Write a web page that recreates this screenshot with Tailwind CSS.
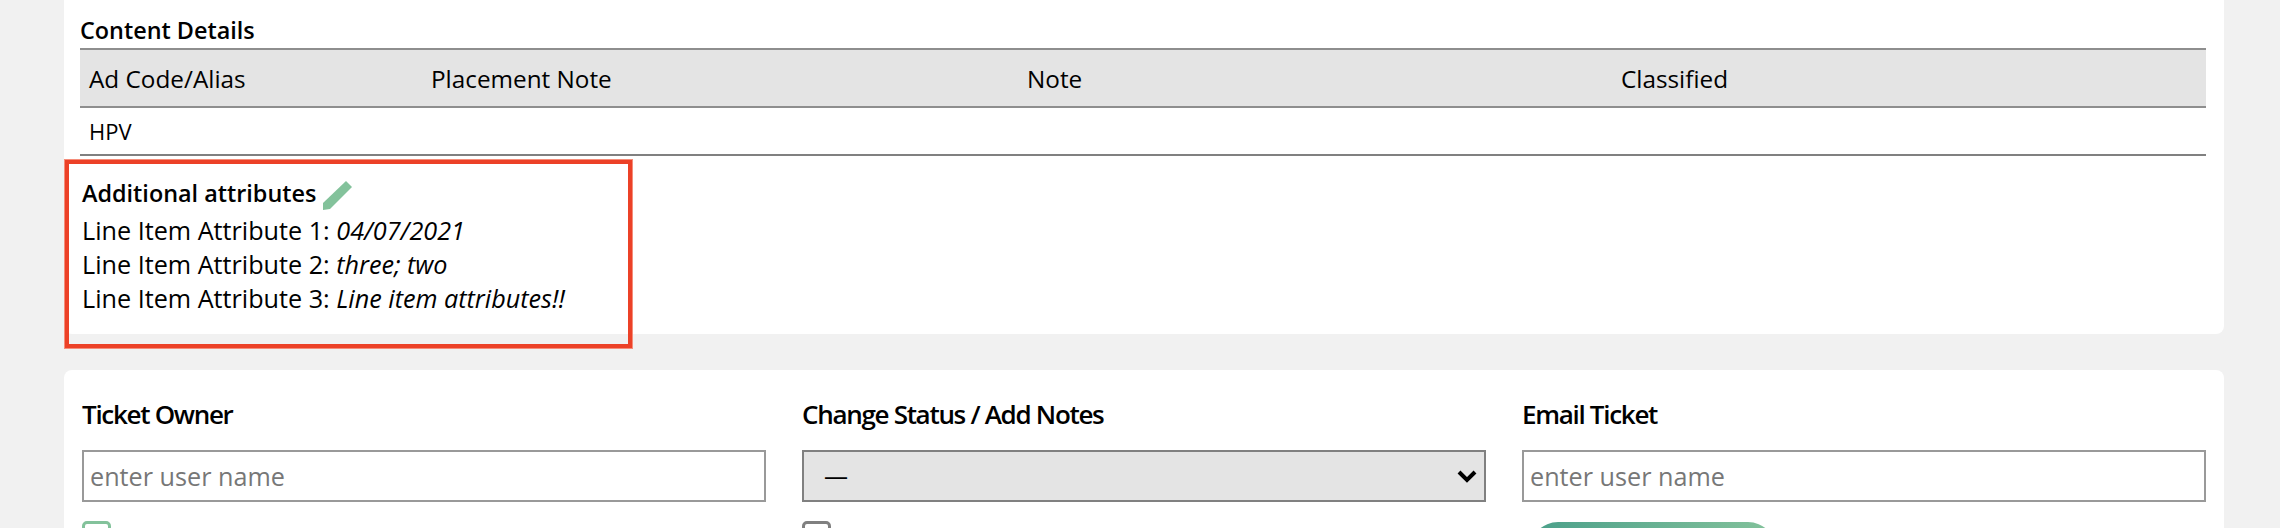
<!DOCTYPE html>
<html lang="en">
<head>
    <meta charset="UTF-8">
    <meta name="viewport" content="width=device-width, initial-scale=1.0">
    <title>Ticket</title>
    <script src="https://cdn.jsdelivr.net/npm/@tailwindcss/browser@4"></script>
</head>
<body class="bg-[#f1f1f1] font-['Open_Sans',sans-serif] text-black">
    <div class="relative ml-16 w-[2160px] h-[528px] overflow-hidden">
        <div class="bg-white rounded-b-lg h-[334px] pl-4 pr-[18px] pt-[12px]">
            <h2 class="text-[23.4px] leading-[36px] font-semibold">Content Details</h2>
            <table class="w-full table-fixed text-left">
                <thead>
                    <tr class="h-[58px] bg-[#e4e4e4] border-y-2 border-[#8e8e8e] text-[24.3px]">
                        <th class="w-[342px] pl-[9px] pt-0.5 font-normal">Ad Code/Alias</th>
                        <th class="w-[596px] pl-[9px] pt-0.5 font-normal">Placement Note</th>
                        <th class="w-[594px] pl-[9px] pt-0.5 font-normal">Note</th>
                        <th class="pl-[9px] pt-0.5 font-normal">Classified</th>
                    </tr>
                </thead>
                <tbody>
                    <tr class="h-12 border-b-2 border-[#808080] text-[22px]">
                        <td class="pl-[9px]" colspan="4">HPV</td>
                    </tr>
                </tbody>
            </table>
            <div class="pt-[17px] pl-[2px] text-[25.2px] leading-[34px]">
                <h2 class="flex items-center h-[40px] text-[23.4px] font-semibold">Additional attributes
                    <svg class="ml-[7px] mt-1" width="29" height="29" viewBox="0 0 29 29" fill="#83c29b"><path d="M23 0l6 6L7 28 0 29V22z"/></svg>
                </h2>
                <p>Line Item Attribute 1: <em>04/07/2021</em></p>
                <p>Line Item Attribute 2: <em>three; two</em></p>
                <p>Line Item Attribute 3: <em>Line item attributes!!</em></p>
            </div>
        </div>

        <!-- highlight over the attributes -->
        <div class="absolute left-0 top-[159px] w-[569px] h-[190px] border border-[#f58d7a]">
            <div class="w-full h-full border-4 border-[#ec4127]"></div>
        </div>

        <div class="mt-9 bg-white rounded-t-lg h-[158px] overflow-hidden pl-[18px] pr-[18px] pt-[24px] grid grid-cols-3 gap-9">
            <div>
                <h3 class="text-[26px] leading-[40px] font-semibold tracking-[-1.3px]">Ticket Owner</h3>
                <input type="text" placeholder="enter user name" class="mt-4 block w-full h-[52px] border-2 border-[#999] px-1.5 text-[25.2px] placeholder:text-[#777]">
                <div class="mt-[19px] size-[29px] border-3 border-[#83c29b] rounded-[5px]"></div>
            </div>
            <div>
                <h3 class="text-[26px] leading-[40px] font-semibold tracking-[-1.3px]">Change Status / Add Notes</h3>
                <div class="mt-4 flex items-center justify-between h-[52px] border-2 border-[#808080] bg-[#e4e4e4] pl-[20px] pr-[7px] text-[24px]">
                    <span>—</span>
                    <svg width="20" height="13" viewBox="0 0 20 13" fill="none" stroke="black" stroke-width="4"><path d="M2 2l8 8 8-8"/></svg>
                </div>
                <div class="mt-[19px] size-[29px] border-3 border-[#808080] rounded-[5px]"></div>
            </div>
            <div>
                <h3 class="text-[26px] leading-[40px] font-semibold tracking-[-1.3px]">Email Ticket</h3>
                <input type="text" placeholder="enter user name" class="mt-4 block w-full h-[52px] border-2 border-[#999] px-1.5 text-[25.2px] placeholder:text-[#777]">
                <div class="mt-5 ml-2 h-14 w-[246px] rounded-full bg-linear-to-r from-[#4aa08a] to-[#83c29b]"></div>
            </div>
        </div>
    </div>
</body>
</html>
